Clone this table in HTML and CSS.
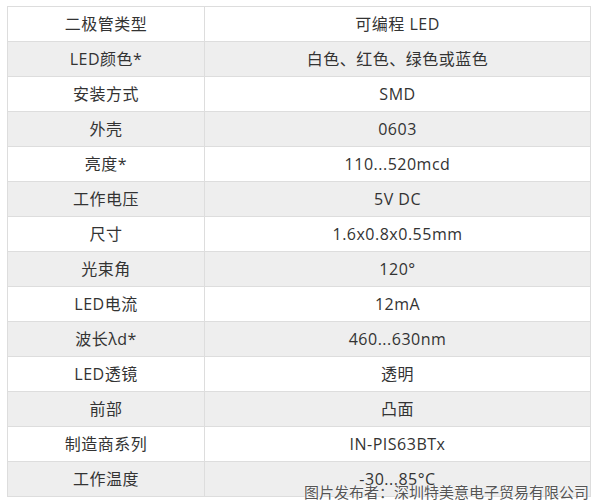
FILE: index.html
```html
<!DOCTYPE html>
<html lang="zh">
<head>
<meta charset="utf-8">
<link rel="stylesheet" href="styles.css">
</head>
<body>
<div class="page">
  <table class="spec">
    <tbody>
      <tr><td class="k">二极管类型</td><td class="v">可编程 LED</td></tr>
      <tr><td class="k">LED颜色*</td><td class="v">白色、红色、绿色或蓝色</td></tr>
      <tr><td class="k">安装方式</td><td class="v">SMD</td></tr>
      <tr><td class="k">外壳</td><td class="v">0603</td></tr>
      <tr><td class="k">亮度*</td><td class="v">110...520mcd</td></tr>
      <tr><td class="k">工作电压</td><td class="v">5V DC</td></tr>
      <tr><td class="k">尺寸</td><td class="v">1.6x0.8x0.55mm</td></tr>
      <tr><td class="k">光束角</td><td class="v">120°</td></tr>
      <tr><td class="k">LED电流</td><td class="v">12mA</td></tr>
      <tr><td class="k">波长λd*</td><td class="v">460...630nm</td></tr>
      <tr><td class="k">LED透镜</td><td class="v">透明</td></tr>
      <tr><td class="k">前部</td><td class="v">凸面</td></tr>
      <tr><td class="k">制造商系列</td><td class="v">IN-PIS63BTx</td></tr>
      <tr><td class="k">工作温度</td><td class="v">-30...85°C</td></tr>
    </tbody>
  </table>
  <div class="watermark">图片发布者：深圳特美意电子贸易有限公司</div>
</div>
</body>
</html>
```

FILE: styles.css
```css
html, body {
  margin: 0;
  padding: 0;
  background: #ffffff;
}
.page {
  position: relative;
  width: 600px;
  height: 504px;
  padding: 6px 0 0 7px;
  box-sizing: border-box;
  font-family: "Open Sans", "Noto Sans CJK SC", sans-serif;
  color: #333333;
}
.spec {
  border-collapse: collapse;
  width: 584px;
  table-layout: fixed;
}
.spec td {
  border: 1px solid #dddddd;
  height: 34px;
  padding: 0;
  text-align: center;
  vertical-align: middle;
  font-size: 16px;
  letter-spacing: 0.5px;
  line-height: 20px;
}
.spec td.k {
  width: 196px;
}
.spec tr:nth-child(even) td {
  background: #eeeeee;
}
.watermark {
  position: absolute;
  right: 11px;
  bottom: 2px;
  font-family: "Noto Sans CJK SC", sans-serif;
  font-size: 15px;
  line-height: 20px;
  color: #555555;
  text-shadow: 0 0 2px #ffffff, 0 0 1px #ffffff;
}
```
